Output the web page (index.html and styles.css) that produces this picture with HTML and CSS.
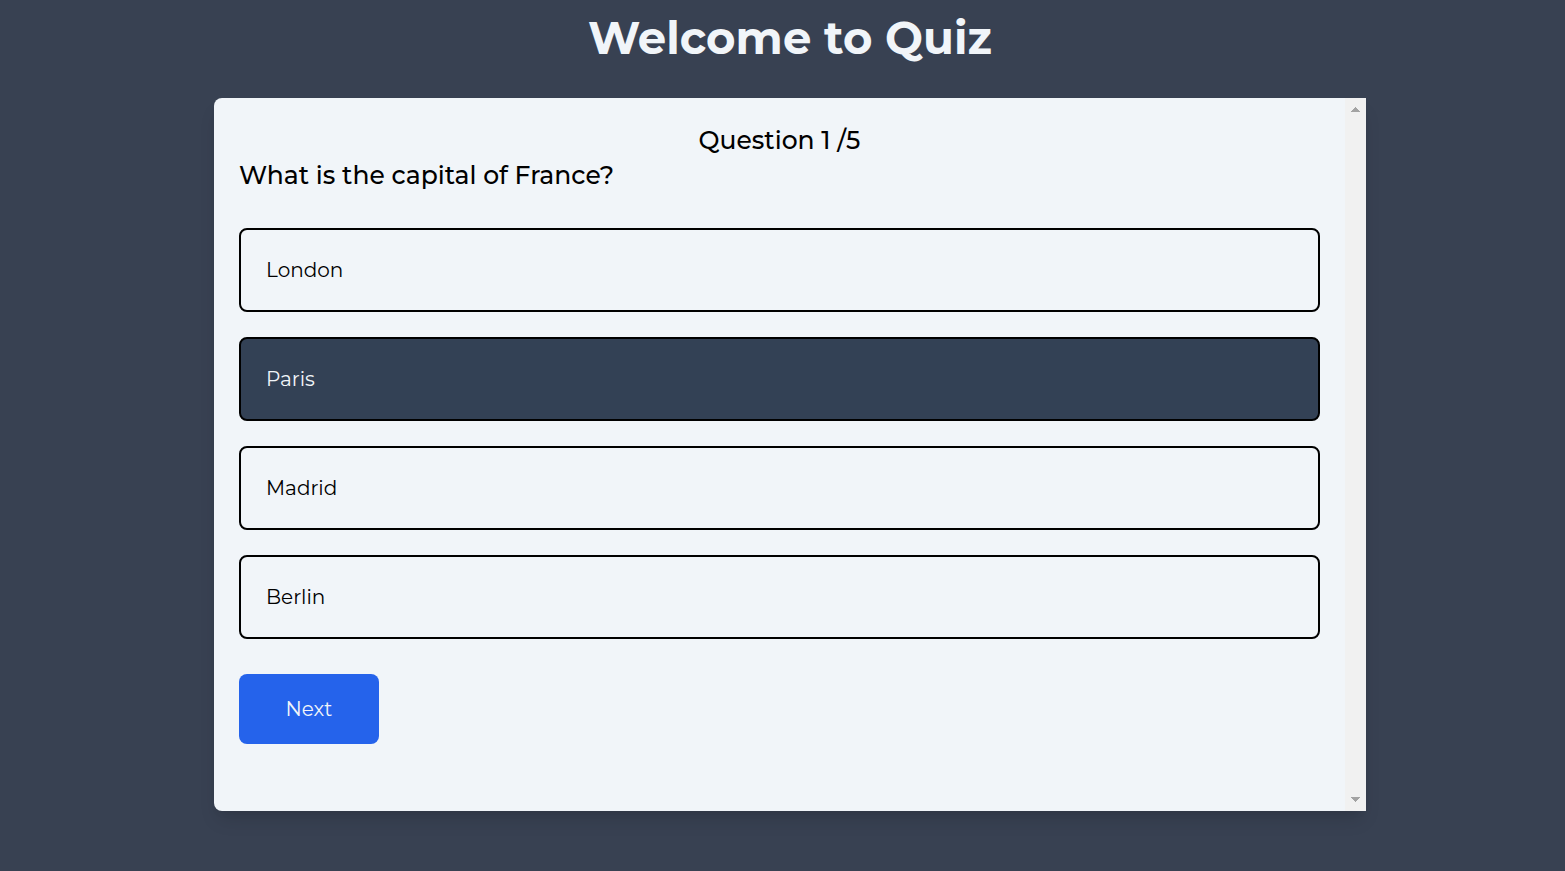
FILE: index.html
```html
<!DOCTYPE html>
<html lang="en">
<head>
  <meta charset="utf-8">
  <meta name="viewport" content="width=device-width, initial-scale=1">
  <title>Quiz</title>
  <link rel="stylesheet" href="styles.css">
</head>
<body>
  <main class="page">
    <h1 class="title">Welcome to Quiz</h1>
    <section class="card">
      <div class="quiz">
        <p class="progress">Question 1 /5</p>
        <h2 class="question">What is the capital of France?</h2>
        <div class="options">
          <button class="option" type="button">London</button>
          <button class="option option-selected" type="button" aria-pressed="true">Paris</button>
          <button class="option" type="button">Madrid</button>
          <button class="option" type="button">Berlin</button>
        </div>
        <button class="next" type="button">Next</button>
      </div>
      <div class="scrollbar" aria-hidden="true">
        <svg width="9" height="5" viewBox="0 0 9 5" shape-rendering="crispEdges"><path d="M4 0h1v1h1v1h1v1h1v1h1v1H0V4h1V3h1V2h1V1h1z" fill="#a3a3a3"/></svg>
        <svg width="9" height="5" viewBox="0 0 9 5" shape-rendering="crispEdges"><path d="M0 0h9v1H8v1H7v1H6v1H5v1H4V4H3V3H2V2H1V1H0z" fill="#a3a3a3"/></svg>
      </div>
    </section>
  </main>
</body>
</html>
```
FILE: styles.css
```css
* {
  box-sizing: border-box;
}

body {
  margin: 0;
  min-height: 100vh;
  background: #384152;
  color: #000;
  font-family: Montserrat, Inter, sans-serif;
}

.page {
  display: flex;
  flex-direction: column;
  align-items: center;
  gap: 22px;
  padding: 0 0 60px 15px;
}

.title {
  margin: 0;
  color: #f1f5f9;
  font-size: 45px;
  font-weight: 700;
  line-height: 76px;
}

.card {
  display: flex;
  width: 100%;
  max-width: 1152px;
  overflow: hidden;
  border-radius: 8px 0 0 8px;
  background: #f1f5f9;
  box-shadow: 0 12px 19px -4px rgba(0, 0, 0, 0.12), 0 5px 8px -5px rgba(0, 0, 0, 0.1);
}

.quiz {
  flex: 1;
  padding: 25px 25px 67px;
}

.progress,
.question {
  margin: 0;
  font-size: 25px;
  font-weight: 500;
  line-height: 35px;
}

.progress {
  text-align: center;
}

.options {
  display: flex;
  flex-direction: column;
  gap: 25px;
  margin: 35px 0;
}

.option {
  padding: 25px;
  border: 2px solid #000;
  border-radius: 8px;
  background: transparent;
  color: #000;
  font-family: inherit;
  font-size: 20px;
  font-weight: 400;
  line-height: 30px;
  text-align: left;
  cursor: pointer;
}

.option-selected {
  background: #334155;
  color: #f1f5f9;
}

.next {
  display: block;
  min-width: 140px;
  padding: 20px;
  border: 0;
  border-radius: 8px;
  background: #2563eb;
  color: #f1f5f9;
  font-family: inherit;
  font-size: 20px;
  font-weight: 400;
  line-height: 30px;
  cursor: pointer;
}

.scrollbar {
  display: flex;
  flex-direction: column;
  align-items: center;
  justify-content: space-between;
  width: 21px;
  padding: 9px 0;
  background: #f1f1f1;
}
```
